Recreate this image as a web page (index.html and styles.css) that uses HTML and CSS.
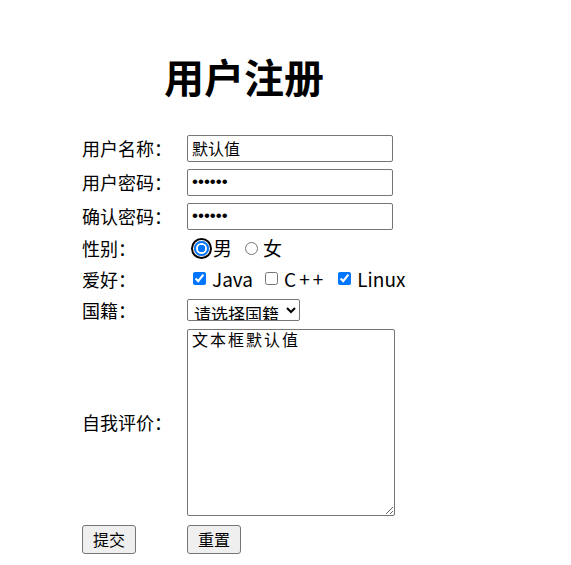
FILE: index.html
```html
<!DOCTYPE html>
<html lang="zh">
<head>
<meta charset="utf-8">
<title>用户注册</title>
<link rel="stylesheet" href="styles.css">
</head>
<body>
<div class="page">
  <h1 class="title">用户注册</h1>
  <form class="form">
    <label class="lbl r1">用户名称：</label>
    <div class="fld"><input class="txt" type="text" value="默认值"></div>

    <label class="lbl">用户密码：</label>
    <div class="fld"><input class="txt pwd" type="password" value="123456"></div>

    <label class="lbl">确认密码：</label>
    <div class="fld"><input class="txt pwd" type="password" value="123456"></div>

    <label class="lbl">性别：</label>
    <div class="fld opts">
      <input class="radio focus" type="radio" name="sex" checked><span class="opt">男</span>
      <input class="radio" type="radio" name="sex"><span class="opt">女</span>
    </div>

    <label class="lbl">爱好：</label>
    <div class="fld opts">
      <input class="chk" type="checkbox" checked><span class="opt">Java</span>
      <input class="chk" type="checkbox"><span class="opt wide">C++</span>
      <input class="chk" type="checkbox" checked><span class="opt">Linux</span>
    </div>

    <label class="lbl">国籍：</label>
    <div class="fld"><select class="sel"><option>请选择国籍</option></select></div>

    <label class="lbl">自我评价：</label>
    <div class="fld"><textarea class="area">文本框默认值</textarea></div>

    <div class="fld"><button class="btn" type="button">提交</button></div>
    <div class="fld"><button class="btn" type="button">重置</button></div>
  </form>
</div>
</body>
</html>
```
FILE: styles.css
```css
html, body {
  margin: 0;
  padding: 0;
  background: #fff;
}
body {
  font-family: "Noto Sans CJK SC", "Noto Sans", sans-serif;
  color: #000;
}
.page {
  padding: 47px 0 0 82px;
  width: 324px;
}
.title {
  margin: 0;
  height: 84px;
  font-size: 40px;
  line-height: 58px;
  font-weight: 700;
  text-align: center;
}
.form {
  display: grid;
  grid-template-columns: 105px 220px;
  grid-template-rows: 34px 34px 34px 30px 31px 32px 192px 42px;
  align-items: center;
}
.lbl {
  font-size: 18px;
  line-height: 24px;
  white-space: nowrap;
}
.fld {
  display: flex;
  align-items: center;
}
.txt {
  box-sizing: border-box;
  width: 206px;
  height: 27px;
  margin: 0;
  padding: 1px 4px;
  border: 1px solid #767676;
  border-radius: 2px;
  font-family: "Noto Sans CJK SC", sans-serif;
  font-size: 16px;
  color: #000;
}
.pwd {
  font-family: "Liberation Sans", sans-serif;
  font-size: 17px;
  letter-spacing: 0;
}
.radio {
  width: 13px;
  height: 13px;
  margin: 0 5px 0 0;
  accent-color: #0075ff;
}
.radio.focus {
  appearance: none;
  -webkit-appearance: none;
  box-sizing: border-box;
  width: 15px;
  height: 15px;
  margin: 0 4px 0 7px;
  border-radius: 50%;
  border: 2px solid #0075ff;
  background: radial-gradient(circle, #0075ff 0, #0075ff 3.5px, #fff 4px);
  box-shadow: 0 0 0 1px #fff, 0 0 0 3px #000;
}
.opts .opt {
  margin-right: 13px;
}
.chk {
  width: 13px;
  height: 13px;
  margin: 0 6px 0 6px;
  accent-color: #0075ff;
}
.opts .chk + .opt {
  margin-right: 6px;
}
.opt {
  font-size: 19px;
  line-height: 24px;
}
.wide {
  letter-spacing: 3px;
}
.sel {
  width: 113px;
  height: 22px;
  margin: 0;
  padding: 0 0 0 2px;
  border: 1px solid #767676;
  border-radius: 2px;
  background: #fff;
  font-family: "Noto Sans CJK SC", sans-serif;
  font-size: 17px;
  color: #000;
}
.area {
  box-sizing: border-box;
  width: 208px;
  height: 187px;
  margin: 0;
  padding: 0 4px;
  border: 1px solid #767676;
  border-radius: 2px;
  font-family: "Noto Sans CJK SC", monospace;
  font-size: 16px;
  line-height: 18px;
  letter-spacing: 2px;
  color: #000;
}
.btn {
  box-sizing: border-box;
  width: 54px;
  height: 29px;
  margin: 0;
  padding: 0;
  border: 1px solid #767676;
  border-radius: 3px;
  background: #efefef;
  font-family: "Noto Sans CJK SC", sans-serif;
  font-size: 16px;
  color: #000;
}
```
